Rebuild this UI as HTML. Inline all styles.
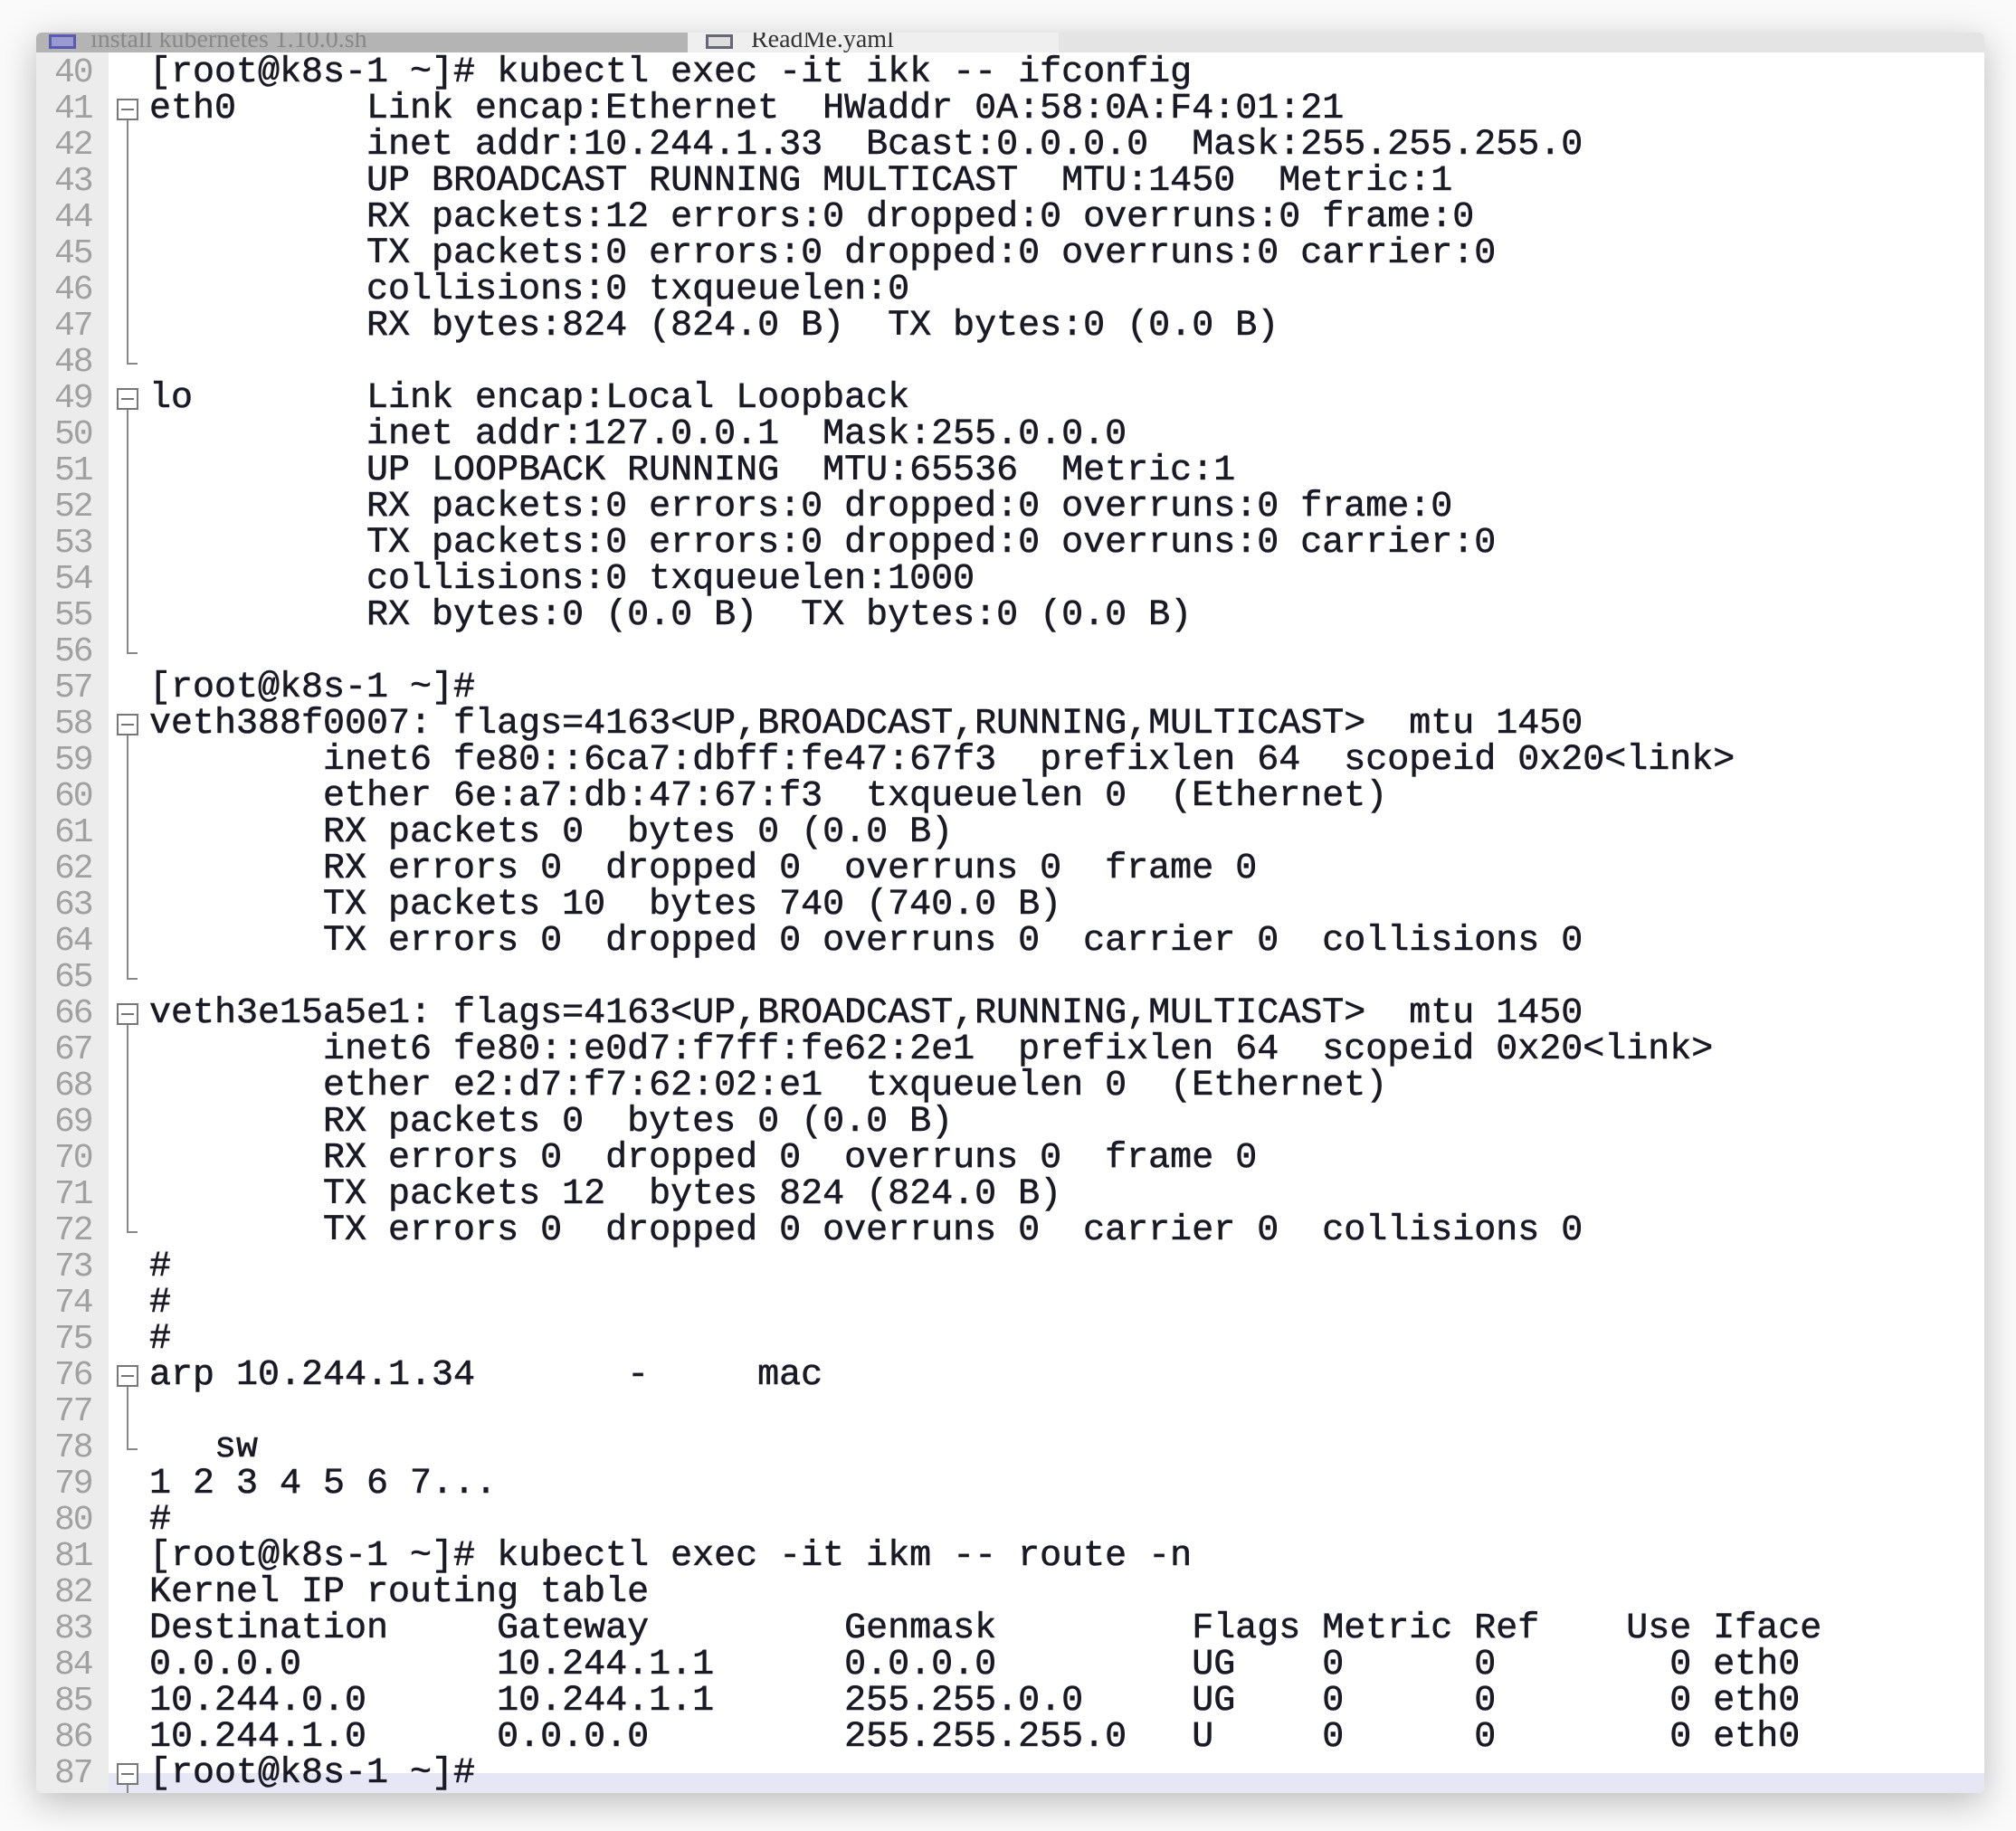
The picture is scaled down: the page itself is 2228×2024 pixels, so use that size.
<!DOCTYPE html>
<html><head><meta charset="utf-8"><style>
html,body{margin:0;padding:0;background:#fafafa;}
body{width:2228px;height:2024px;position:relative;overflow:hidden;font-family:"Liberation Mono",monospace;}
.win{position:absolute;left:40px;top:36px;width:2153px;height:1946px;background:#fff;box-shadow:0 10px 40px rgba(0,0,0,0.25);border-radius:6px;overflow:hidden;}
.tabs{position:absolute;left:0;top:0;width:100%;height:22px;background:#e4e4e4;}
.t1{position:absolute;left:0;top:0;width:720px;height:22px;background:#b4b4b4;color:#888;font-size:28px;line-height:16px;overflow:hidden;white-space:pre;padding-left:60px;box-sizing:border-box;font-family:"Liberation Serif",serif;}
.t2{position:absolute;left:720px;top:0;width:410px;height:22px;background:#efefef;color:#333;font-size:28px;line-height:16px;overflow:hidden;white-space:pre;padding-left:70px;box-sizing:border-box;font-family:"Liberation Serif",serif;}
.ic{position:absolute;top:2px;width:30px;height:16px;border:3px solid #5a5ab0;background:#9a9ad0;box-sizing:border-box;}
.gut{position:absolute;left:0;top:22px;width:80px;bottom:0;background:#ececec;}
.ln{position:absolute;left:20px;width:60px;font-size:38px;line-height:40px;color:#a0a0a0;letter-spacing:-2px;}
.tx{position:absolute;left:125px;font-size:40px;line-height:40px;color:#1a1a26;white-space:pre;-webkit-text-stroke:0.6px #1a1a26;}
.fb{position:absolute;left:89px;width:24px;height:24px;border:2px solid #777;box-sizing:border-box;background:#fff;}
.fb:after{content:"";position:absolute;left:3px;right:3px;top:9px;height:2px;background:#777;}
.fl{position:absolute;left:100px;width:2px;background:#888;}
.fe{position:absolute;left:100px;width:12px;height:2px;background:#888;}
.last{position:absolute;left:80px;right:0;bottom:0;height:22px;background:#e6e6f4;}
</style></head><body>
<div class="win">
<div class="tabs"><div class="t1">install kubernetes 1.10.0.sh</div><div class="ic" style="left:14px"></div><div class="t2">ReadMe.yaml</div><div class="ic" style="left:740px;background:#ddd;border-color:#667"></div></div>
<div class="gut"></div>
<div class="last"></div>
<div id="c"></div>
</div>
<script>
var L={40:"[root@k8s-1 ~]# kubectl exec -it ikk -- ifconfig",
41:"eth0      Link encap:Ethernet  HWaddr 0A:58:0A:F4:01:21",
42:"          inet addr:10.244.1.33  Bcast:0.0.0.0  Mask:255.255.255.0",
43:"          UP BROADCAST RUNNING MULTICAST  MTU:1450  Metric:1",
44:"          RX packets:12 errors:0 dropped:0 overruns:0 frame:0",
45:"          TX packets:0 errors:0 dropped:0 overruns:0 carrier:0",
46:"          collisions:0 txqueuelen:0",
47:"          RX bytes:824 (824.0 B)  TX bytes:0 (0.0 B)",
48:"",
49:"lo        Link encap:Local Loopback",
50:"          inet addr:127.0.0.1  Mask:255.0.0.0",
51:"          UP LOOPBACK RUNNING  MTU:65536  Metric:1",
52:"          RX packets:0 errors:0 dropped:0 overruns:0 frame:0",
53:"          TX packets:0 errors:0 dropped:0 overruns:0 carrier:0",
54:"          collisions:0 txqueuelen:1000",
55:"          RX bytes:0 (0.0 B)  TX bytes:0 (0.0 B)",
56:"",
57:"[root@k8s-1 ~]#",
58:"veth388f0007: flags=4163<UP,BROADCAST,RUNNING,MULTICAST>  mtu 1450",
59:"        inet6 fe80::6ca7:dbff:fe47:67f3  prefixlen 64  scopeid 0x20<link>",
60:"        ether 6e:a7:db:47:67:f3  txqueuelen 0  (Ethernet)",
61:"        RX packets 0  bytes 0 (0.0 B)",
62:"        RX errors 0  dropped 0  overruns 0  frame 0",
63:"        TX packets 10  bytes 740 (740.0 B)",
64:"        TX errors 0  dropped 0 overruns 0  carrier 0  collisions 0",
65:"",
66:"veth3e15a5e1: flags=4163<UP,BROADCAST,RUNNING,MULTICAST>  mtu 1450",
67:"        inet6 fe80::e0d7:f7ff:fe62:2e1  prefixlen 64  scopeid 0x20<link>",
68:"        ether e2:d7:f7:62:02:e1  txqueuelen 0  (Ethernet)",
69:"        RX packets 0  bytes 0 (0.0 B)",
70:"        RX errors 0  dropped 0  overruns 0  frame 0",
71:"        TX packets 12  bytes 824 (824.0 B)",
72:"        TX errors 0  dropped 0 overruns 0  carrier 0  collisions 0",
73:"#",74:"#",75:"#",
76:"arp 10.244.1.34       -     mac",
77:"",
78:"   sw",
79:"1 2 3 4 5 6 7...",
80:"#",
81:"[root@k8s-1 ~]# kubectl exec -it ikm -- route -n",
82:"Kernel IP routing table",
83:"Destination     Gateway         Genmask         Flags Metric Ref    Use Iface",
84:"0.0.0.0         10.244.1.1      0.0.0.0         UG    0      0        0 eth0",
85:"10.244.0.0      10.244.1.1      255.255.0.0     UG    0      0        0 eth0",
86:"10.244.1.0      0.0.0.0         255.255.255.0   U     0      0        0 eth0",
87:"[root@k8s-1 ~]#",88:""};
var h="";
function esc(s){return s.replace(/&/g,"&amp;").replace(/</g,"&lt;").replace(/>/g,"&gt;");}
for(var n=40;n<=88;n++){var t=25+(n-40)*40;
h+='<div class="ln" style="top:'+t+'px">'+n+'</div>';
h+='<div class="tx" style="top:'+t+'px">'+esc(L[n])+'</div>';}
var folds=[[41,48],[49,56],[58,65],[66,72],[76,78],[87,88]];
folds.forEach(function(f){var t=25+(f[0]-40)*40;
h+='<div class="fb" style="top:'+(t+8)+'px"></div>';
var e=25+(f[1]-40)*40+20;
h+='<div class="fl" style="top:'+(t+32)+'px;height:'+(e-t-32)+'px"></div>';
if(f[1]!=88)h+='<div class="fe" style="top:'+e+'px"></div>';});
document.getElementById("c").innerHTML=h;
</script>
</body></html>
